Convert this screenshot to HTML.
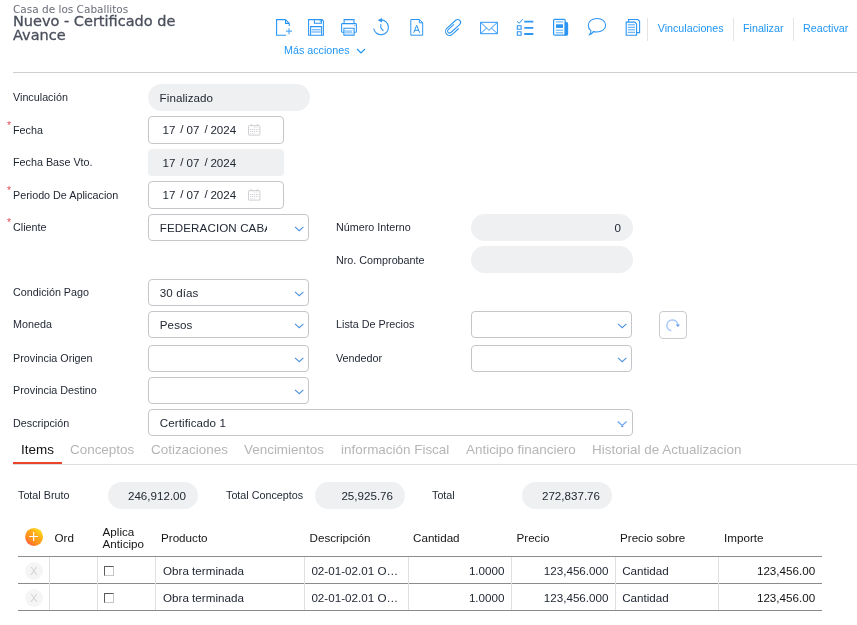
<!DOCTYPE html>
<html><head><meta charset="utf-8">
<style>
*{box-sizing:border-box;margin:0;padding:0}
html,body{width:857px;height:625px;overflow:hidden;background:#fff}
body{font-family:"Liberation Sans",sans-serif;font-size:11px;color:#222;position:relative}
.abs{position:absolute}
.lbl{position:absolute;left:13px;font-size:10.78px;color:#1e2431;white-space:nowrap}
.req{position:absolute;left:7px;color:#e8505b;font-size:10.5px;margin-top:-0.2px}
.inp{position:absolute;height:27.5px;border:1px solid #c5c6c9;border-radius:4px;background:#fff;font-size:11.6px;color:#222834;line-height:25.6px;padding-left:10.5px;white-space:nowrap;overflow:hidden}
.dt span{position:absolute;top:0}
.cal{position:absolute;left:99px;top:6.9px}
.ro{position:absolute;height:27px;background:#eff0f2;border-radius:13.5px;font-size:11.6px;color:#222834;line-height:28px;padding-left:12px;white-space:nowrap}
.chev{position:absolute;right:3.4px;top:11.4px;width:10.4px;height:6px}
.tb{position:absolute;top:22px;font-size:10.72px;color:#2196f3;white-space:nowrap}
.sep{position:absolute;top:18px;width:1px;height:23px;background:#e4e4e4}
.tab{position:absolute;top:442px;font-size:13.45px;color:#b5b5b5;white-space:nowrap}
.th{position:absolute;font-size:11.65px;color:#151515;white-space:nowrap}
.td{position:absolute;font-size:11.65px;color:#222834;white-space:nowrap}
.ic{position:absolute}
#w{position:absolute;left:0;top:0;width:857px;height:625px;will-change:transform}
</style></head><body><div id="w">
<div class="abs" style="left:13px;top:3px;font-size:10.5px;color:#6a6e78;font-family:'DejaVu Sans',sans-serif">Casa de los Caballitos</div>
<div class="abs" style="left:13px;top:15px;font-size:14.5px;line-height:13.6px;color:#4a4f5c;-webkit-text-stroke:0.3px #4a4f5c;font-family:'DejaVu Sans',sans-serif;width:200px">Nuevo - Certificado de<br>Avance</div>

<!-- toolbar icons -->
<svg class="ic" style="left:270px;top:14px" width="376" height="28" viewBox="270 14 376 28" fill="none" stroke="#2b95f3" stroke-width="1.1">
<!-- new doc -->
<path d="M285.5 19.6H276.6V35.2H286M285.5 19.6L289.3 23.4V26M285.5 19.6V23.4H289.3"/><path d="M289 28.2V34.2M286 31.2H292" opacity="0.8" stroke-width="1.2"/>
<!-- save -->
<path d="M308.6 19.6H322L323.4 21V35.2H308.6Z M314.4 19.6V23.2H321.4V19.6 M310.6 35.2V26.6H321.6V35.2" stroke-width="1.05"/>
<path d="M319.4 20.8H320.8V22.2" stroke-width="0.8" opacity="0.8"/>
<path d="M311.8 29.6H320.6" stroke-width="0.8" opacity="0.85"/>
<rect x="311.4" y="30.6" width="9.4" height="2.4" fill="#2b95f3" stroke="none" opacity="0.45"/>
<!-- print -->
<path d="M344.1 23.6V19.6H354V23.6 M343.6 32.2H342.4Q341.6 32.2 341.6 31.4V24.400000000000002Q341.6 23.6 342.4 23.6H355.6Q356.4 23.6 356.4 24.400000000000002V31.4Q356.4 32.2 355.6 32.2H354.4 M343.9 28.2H354.2V35.2H343.9Z" stroke-width="1.05"/>
<rect x="344.6" y="30.2" width="8.8" height="2.8" fill="#2b95f3" stroke="none" opacity="0.45"/>
<path d="M344.6 34H353.6" stroke-width="0.8" opacity="0.6"/>
<rect x="352" y="30.800000000000001" width="1" height="1.8" fill="#fff" stroke="none"/>
<circle cx="354.8" cy="25.600000000000001" r="0.55" fill="#2b95f3" stroke="none"/>
<!-- history -->
<path d="M381 19.9A7.4 7.4 0 1 1 373.7 28.5"/>
<path d="M382 17.9V22.5L377.7 20.2Z" fill="#2b95f3" stroke="none"/>
<path d="M380.8 24.2V27.8L383.4 30.8"/>
<!-- A doc -->
<path d="M410.8 19.5H419.4L422.7 22.8V35.2H410.8Z M419.4 19.5V22.8H422.7" stroke-width="1"/>
<path d="M413.7 32.8L416.65 25.3L419.6 32.8M414.8 30.3H418.5" stroke-width="1"/>
<!-- clip -->
<path transform="matrix(0.736 -0.677 0.677 0.736 440 14)" d="M3.9 23.3L-4.7 23.3A4.05 4.05 0 0 1 -4.7 15.2L7.3 15.2A2.9 2.9 0 0 1 7.3 21L-4.5 21A2 2 0 0 1 -4.5 17L3.3 17" stroke-width="1.05"/>
<!-- mail -->
<path d="M480.6 22.3H497.4V33.7H480.6Z M480.6 22.3L489 30.3L497.4 22.3 M480.6 33.7L486.6 28M497.4 33.7L491.4 28" stroke-width="1"/>
<!-- checklist -->
<path d="M524.3 21.7H533.3M524.3 27.9H533.3M524.3 34H533.3" stroke-width="1.8"/>
<path d="M517.3 25.7H521.1V29.2H517.3Z M517.3 31.8H521.1V35.3H517.3Z"/>
<path d="M517 21.4L519.3 23.2L522.8 19.2" stroke-width="1"/>
<!-- news -->
<path d="M553.6 20.5Q553.600 19.3 554.800 19.3H564Q565.2 19.3 565.2 20.5V35.2H554.800Q553.600 35.200 553.600 34Z" stroke-width="1.2"/>
<path d="M565.200 22.500H566.4Q567.6 22.500 567.6 23.700V34Q567.6 35.2 566.4 35.2H565.200Z" fill="#2b95f3"/>
<path d="M555.8 21.900H563.2M555.8 30.2H563.2M555.8 32.800H563.2" stroke-width="1" opacity="0.8"/>
<rect x="556" y="24.300" width="7" height="3.600" fill="#2b95f3" stroke="none"/>
<!-- comment -->
<path d="M597 18.500C602 18.500 605.600 21.300 605.600 25.200C605.600 29.200 601.600 32 596.600 32C595.400 32 594.400 31.900 593.400 31.600C592.400 33.200 591 34.200 589.600 34.600C590.600 33.400 591 32 590.900 30.600C589.200 29.300 588.300 27.400 588.300 25.200C588.300 21.300 592 18.500 597 18.500Z"/>
<!-- docs -->
<path d="M628.600 22V19.500H637.800L639.600 21.300V32.600H637"/>
<path d="M626.200 22.100H634.800L636.600 23.900V35.200H626.200Z" />
<path d="M627.800 24.800H635M627.800 27.300H635M627.800 29.800H635M627.800 32.300H635" stroke-width="1" opacity="0.85"/>
</svg>
<div class="tb" style="left:284px;top:44px">Más acciones</div>
<svg class="ic" style="left:356px;top:48px" width="10" height="7" viewBox="0 0 10 7"><path d="M1 1l4 4 4-4" fill="none" stroke="#2196f3" stroke-width="1.2"/></svg>
<div class="sep" style="left:647px"></div>
<div class="tb" style="left:657.7px">Vinculaciones</div>
<div class="sep" style="left:733px"></div>
<div class="tb" style="left:743px">Finalizar</div>
<div class="sep" style="left:793px"></div>
<div class="tb" style="left:803px">Reactivar</div>

<div class="abs" style="left:13px;top:72px;width:844px;height:1px;background:#cdcfd3"></div>

<!-- form -->
<div class="lbl" style="top:91px">Vinculación</div>
<div class="ro" style="left:148px;top:84px;width:162px;padding-left:11.6px;letter-spacing:0.07px">Finalizado</div>

<div class="req" style="top:119px">*</div>
<div class="lbl" style="top:124px">Fecha</div>
<div class="inp dt" style="left:148px;top:116px;width:136px"><span style="left:13.6px">17</span><span style="left:31.2px;top:-1.4px">/</span><span style="left:37.6px">07</span><span style="left:55.4px;top:-1.4px">/</span><span style="left:61.4px">2024</span><svg class="cal" width="13" height="12" viewBox="0 0 13 12" fill="none" stroke="#c9cbce" stroke-width="0.9"><rect x="0.5" y="1.7" width="11.4" height="9.4" rx="0.6"/><path d="M3.3 0.3L2.2 1.7M3.3 0.3L4.4 1.7M9.5 0.3L8.4 1.7M9.5 0.3L10.6 1.7" stroke-width="0.8"/><path d="M5.5 3.3H10" stroke-width="0.6" opacity="0.6"/><path d="M2 5.5H10.4M2 7.6H10.4" stroke-width="0.9" stroke-dasharray="1.3 0.7"/><path d="M2 9.5H7" stroke-width="0.7" stroke-dasharray="1.3 0.7" opacity="0.6"/></svg></div>

<div class="lbl" style="top:156px">Fecha Base Vto.</div>
<div class="inp dt" style="left:148px;top:149px;width:136px;height:27px;border:none;background:#eff0f2;border-radius:4px;padding-left:12px;line-height:28px"><span style="left:14.6px">17</span><span style="left:32.2px;top:-1.4px">/</span><span style="left:38.6px">07</span><span style="left:56.4px;top:-1.4px">/</span><span style="left:62.4px">2024</span></div>

<div class="req" style="top:184px">*</div>
<div class="lbl" style="top:189px">Periodo De Aplicacion</div>
<div class="inp dt" style="left:148px;top:181px;width:136px"><span style="left:13.6px">17</span><span style="left:31.2px;top:-1.4px">/</span><span style="left:37.6px">07</span><span style="left:55.4px;top:-1.4px">/</span><span style="left:61.4px">2024</span><svg class="cal" width="13" height="12" viewBox="0 0 13 12" fill="none" stroke="#c9cbce" stroke-width="0.9"><rect x="0.5" y="1.7" width="11.4" height="9.4" rx="0.6"/><path d="M3.3 0.3L2.2 1.7M3.3 0.3L4.4 1.7M9.5 0.3L8.4 1.7M9.5 0.3L10.6 1.7" stroke-width="0.8"/><path d="M5.5 3.3H10" stroke-width="0.6" opacity="0.6"/><path d="M2 5.5H10.4M2 7.6H10.4" stroke-width="0.9" stroke-dasharray="1.3 0.7"/><path d="M2 9.5H7" stroke-width="0.7" stroke-dasharray="1.3 0.7" opacity="0.6"/></svg></div>

<div class="req" style="top:216px">*</div>
<div class="lbl" style="top:221px">Cliente</div>
<div class="inp" style="left:148px;top:214px;width:161px;height:27px;padding-left:10.8px"><span style="display:inline-block;width:107px;overflow:hidden;vertical-align:top;height:25px;letter-spacing:0.1px">FEDERACION CABALLITOS</span><svg class="chev" viewBox="0 0 10.4 6"><path d="M1 0.9L5.2 4.7L9.4 0.9" fill="none" stroke="#4f93dc" stroke-width="1.1"/></svg></div>

<div class="lbl" style="left:336px;top:221px">Número Interno</div>
<div class="ro" style="left:471px;top:214px;width:162px;text-align:right;padding-right:12px">0</div>
<div class="lbl" style="left:336px;top:254px">Nro. Comprobante</div>
<div class="ro" style="left:471px;top:246px;width:162px"></div>

<div class="lbl" style="top:286px">Condición Pago</div>
<div class="inp" style="left:148px;top:279px;width:161px;height:27px;letter-spacing:0.08px;padding-left:10.8px">30 días<svg class="chev" viewBox="0 0 10.4 6"><path d="M1 0.9L5.2 4.7L9.4 0.9" fill="none" stroke="#4f93dc" stroke-width="1.1"/></svg></div>

<div class="lbl" style="top:318px">Moneda</div>
<div class="inp" style="left:148px;top:311px;width:161px;height:27px;letter-spacing:0.08px;padding-left:10.8px">Pesos<svg class="chev" viewBox="0 0 10.4 6"><path d="M1 0.9L5.2 4.7L9.4 0.9" fill="none" stroke="#4f93dc" stroke-width="1.1"/></svg></div>
<div class="lbl" style="left:336px;top:318px">Lista De Precios</div>
<div class="inp" style="left:471px;top:311px;width:161px;height:27px"><svg class="chev" viewBox="0 0 10.4 6"><path d="M1 0.9L5.2 4.7L9.4 0.9" fill="none" stroke="#4f93dc" stroke-width="1.1"/></svg></div>
<div class="inp" style="left:659px;top:311px;width:28px;height:27.7px;padding:0;border-color:#c8cacf"></div>
<svg class="ic" style="left:660px;top:312px" width="26" height="26" viewBox="660 312 26 26" fill="none"><path d="M671.3 330.8A5.5 5.5 0 1 1 677.8 324.6" stroke="#a9c9fa" stroke-width="1.5"/><path d="M675.8 324.4H680L677.9 327Z" fill="#5b9be8"/></svg>

<div class="lbl" style="top:352px">Provincia Origen</div>
<div class="inp" style="left:148px;top:345px;width:161px;height:27px"><svg class="chev" viewBox="0 0 10.4 6"><path d="M1 0.9L5.2 4.7L9.4 0.9" fill="none" stroke="#4f93dc" stroke-width="1.1"/></svg></div>
<div class="lbl" style="left:336px;top:352px">Vendedor</div>
<div class="inp" style="left:471px;top:345px;width:161px;height:27px"><svg class="chev" viewBox="0 0 10.4 6"><path d="M1 0.9L5.2 4.7L9.4 0.9" fill="none" stroke="#4f93dc" stroke-width="1.1"/></svg></div>

<div class="lbl" style="top:384px">Provincia Destino</div>
<div class="inp" style="left:148px;top:377px;width:161px;height:27px"><svg class="chev" viewBox="0 0 10.4 6"><path d="M1 0.9L5.2 4.7L9.4 0.9" fill="none" stroke="#4f93dc" stroke-width="1.1"/></svg></div>

<div class="lbl" style="top:417px">Descripción</div>
<div class="inp" style="left:148px;top:409px;width:485px;height:27px;letter-spacing:0.08px;padding-left:10.8px">Certificado 1<svg class="chev" style="height:8px;top:9.5px;right:4.4px" viewBox="0 -1 10.4 8"><path d="M0.8 0.4L5.2 4.4L9.6 0.4" fill="none" stroke="#6aa6f2" stroke-width="1.3"/><path d="M4.2 5.6H6.4" stroke="#3f7fc8" stroke-width="0.8"/></svg></div>

<!-- tabs -->
<div class="tab" style="left:21px;color:#111">Items</div>
<div class="tab" style="left:70px">Conceptos</div>
<div class="tab" style="left:151px">Cotizaciones</div>
<div class="tab" style="left:244px">Vencimientos</div>
<div class="tab" style="left:341px">información Fiscal</div>
<div class="tab" style="left:466px">Anticipo financiero</div>
<div class="tab" style="left:592px">Historial de Actualizacion</div>
<div class="abs" style="left:13px;top:464px;width:844px;height:1px;background:#ddd"></div>
<div class="abs" style="left:13px;top:462px;width:49px;height:2px;background:#e8452c"></div>

<!-- totals -->
<div class="lbl" style="left:18px;top:489px">Total Bruto</div>
<div class="ro" style="left:108px;top:482px;width:90px;text-align:right;padding:0 12px 0 0">246,912.00</div>
<div class="lbl" style="left:226px;top:489px">Total Conceptos</div>
<div class="ro" style="left:315px;top:482px;width:90px;text-align:right;padding:0 12px 0 0">25,925.76</div>
<div class="lbl" style="left:432px;top:489px">Total</div>
<div class="ro" style="left:522px;top:482px;width:90px;text-align:right;padding:0 12px 0 0">272,837.76</div>

<!-- grid -->
<svg class="ic" style="left:24px;top:527px" width="20" height="20" viewBox="24 527 20 20"><defs><linearGradient id="pg" x1="0.85" y1="0.1" x2="0.15" y2="0.92"><stop offset="0" stop-color="#ffdc1a"/><stop offset="0.4" stop-color="#ffa81a"/><stop offset="0.75" stop-color="#ff8a20"/><stop offset="1" stop-color="#ff5a46"/></linearGradient></defs><circle cx="34.1" cy="536.9" r="9" fill="url(#pg)"/><path d="M29.2 536.5H38.1M33.65 532V541" stroke="#fff" stroke-width="1.15" fill="none"/></svg>
<div class="th" style="left:54.5px;top:531px">Ord</div>
<div class="th" style="left:102.6px;top:526px;line-height:12.4px">Aplica<br>Anticipo</div>
<div class="th" style="left:161px;top:531px">Producto</div>
<div class="th" style="left:309.6px;top:531px">Descripción</div>
<div class="th" style="left:413px;top:531px">Cantidad</div>
<div class="th" style="left:516.5px;top:531px">Precio</div>
<div class="th" style="left:620px;top:531px">Precio sobre</div>
<div class="th" style="left:724px;top:531px">Importe</div>

<div class="abs" style="left:18px;top:556px;width:804px;height:1px;background:#8c8c8c"></div>
<div class="abs" style="left:18px;top:583px;width:804px;height:1px;background:#8a8a8a"></div>
<div class="abs" style="left:18px;top:610px;width:804px;height:1px;background:#8a8a8a"></div>

<div class="abs" style="left:49px;top:557px;width:1px;height:53px;background:#e0e0e0"></div>
<div class="abs" style="left:97px;top:557px;width:1px;height:53px;background:#e0e0e0"></div>
<div class="abs" style="left:155px;top:557px;width:1px;height:53px;background:#e0e0e0"></div>
<div class="abs" style="left:304px;top:557px;width:1px;height:53px;background:#e0e0e0"></div>
<div class="abs" style="left:408px;top:557px;width:1px;height:53px;background:#e0e0e0"></div>
<div class="abs" style="left:511px;top:557px;width:1px;height:53px;background:#e0e0e0"></div>
<div class="abs" style="left:615px;top:557px;width:1px;height:53px;background:#e0e0e0"></div>
<div class="abs" style="left:718px;top:557px;width:1px;height:53px;background:#e0e0e0"></div>
<div class="abs" style="left:25px;top:561.5px;width:18px;height:18px;border-radius:9px;background:#f5f5f5;color:#d2d2d2;font-size:11px;line-height:18px;text-align:center">X</div>
<div class="abs" style="left:104px;top:565.5px;width:10px;height:10px;border:1px solid;border-color:#5a5a5a #c6c6c6 #c6c6c6 #5a5a5a;border-radius:0.5px;background:#fff"></div>
<div class="td" style="left:163px;top:564px">Obra terminada</div>
<div class="td" style="left:311.4px;top:564px">02-01-02.01 O…</div>
<div class="td" style="left:404.5px;width:100px;text-align:right;top:564px">1.0000</div>
<div class="td" style="left:508.5px;width:100px;text-align:right;top:564px">123,456.000</div>
<div class="td" style="left:622.2px;top:564px">Cantidad</div>
<div class="td" style="left:715px;width:100.2px;text-align:right;top:564px;color:#111">123,456.00</div>
<div class="abs" style="left:25px;top:588.5px;width:18px;height:18px;border-radius:9px;background:#f5f5f5;color:#d2d2d2;font-size:11px;line-height:18px;text-align:center">X</div>
<div class="abs" style="left:104px;top:592.5px;width:10px;height:10px;border:1px solid;border-color:#5a5a5a #c6c6c6 #c6c6c6 #5a5a5a;border-radius:0.5px;background:#fff"></div>
<div class="td" style="left:163px;top:591px">Obra terminada</div>
<div class="td" style="left:311.4px;top:591px">02-01-02.01 O…</div>
<div class="td" style="left:404.5px;width:100px;text-align:right;top:591px">1.0000</div>
<div class="td" style="left:508.5px;width:100px;text-align:right;top:591px">123,456.000</div>
<div class="td" style="left:622.2px;top:591px">Cantidad</div>
<div class="td" style="left:715px;width:100.2px;text-align:right;top:591px;color:#111">123,456.00</div>

</div></body></html>
